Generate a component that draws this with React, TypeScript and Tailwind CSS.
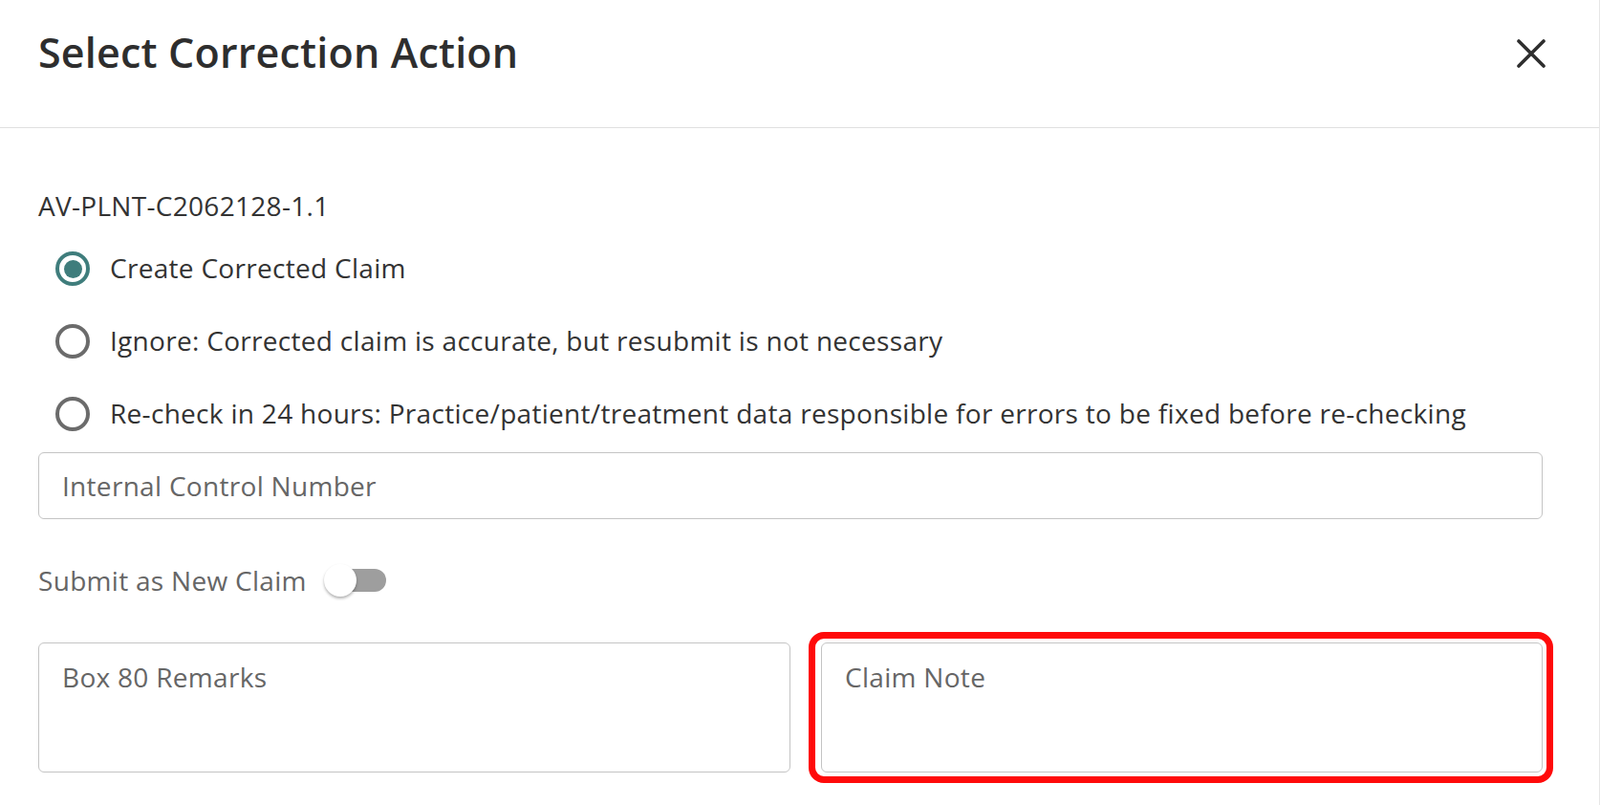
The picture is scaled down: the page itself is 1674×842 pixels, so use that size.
import { useState } from 'react';

const options = [
  'Create Corrected Claim',
  'Ignore: Corrected claim is accurate, but resubmit is not necessary',
  'Re-check in 24 hours: Practice/patient/treatment data responsible for errors to be fixed before re-checking',
];

function Radio({ checked }: { checked: boolean }) {
  return (
    <span
      className={
        checked
          ? 'flex h-[36px] w-[36px] shrink-0 items-center justify-center rounded-full border-[4px] border-[#3f7d7c]'
          : 'flex h-[36px] w-[36px] shrink-0 items-center justify-center rounded-full border-[4px] border-[#6b6b6b]'
      }
    >
      {checked && <span className="h-[19px] w-[19px] rounded-full bg-[#3f7d7c]" />}
    </span>
  );
}

export default function App() {
  const [selected, setSelected] = useState(0);

  return (
    <div className="min-h-screen w-full border-r border-[#e6e6e6] bg-white font-['Open_Sans',sans-serif] tracking-[0.3px] text-[#333]">
      {/* Header */}
      <div className="flex h-[134px] items-center justify-between border-b border-[#e0e0e0] pb-[22px] pl-[40px] pr-[56px]">
        <h1 className="text-[43px] font-semibold tracking-[0.2px] text-[#2e2e2e]">Select Correction Action</h1>
        <button className="flex h-[30px] w-[30px] items-center justify-center">
          <svg width="30" height="30" viewBox="0 0 30 30">
            <path d="M2 2 L28 28 M28 2 L2 28" stroke="#2e2e2e" strokeWidth="3.6" strokeLinecap="round" />
          </svg>
        </button>
      </div>

      {/* Body */}
      <div className="pl-[40px] pr-[59px] pt-[61px]">
        <div className="h-[40px] text-[28px] leading-[40px] text-[#333]">AV-PLNT-C2062128-1.1</div>

        <div className="mt-[8px] flex flex-col">
          {options.map((label, i) => (
            <label
              key={i}
              onClick={() => setSelected(i)}
              className="flex h-[76px] cursor-pointer items-center gap-[21px] pl-[18px]"
            >
              <Radio checked={selected === i} />
              <span className="-mt-[3px] text-[28px] text-[#333]">{label}</span>
            </label>
          ))}
        </div>

        <input
          placeholder="Internal Control Number"
          className="mt-[2px] h-[70px] w-full rounded-[6px] border border-[#c4c4c4] px-[24px] text-[28px] text-[#333] outline-none placeholder:text-[#666]"
        />

        <div className="mt-[44px] flex h-[40px] items-center">
          <span className="text-[28px] text-[#666]">Submit as New Claim</span>
          <div className="relative ml-[25px] h-[24px] w-[58px] rounded-full bg-[#9e9e9e]">
            <span className="absolute left-[-7px] top-[-5px] h-[34px] w-[34px] rounded-full bg-white shadow-[0_2px_3px_rgba(0,0,0,0.3)]" />
          </div>
        </div>

        <div className="mt-[45px] grid grid-cols-2">
          <textarea
            placeholder="Box 80 Remarks"
            className="h-[136px] w-full resize-none rounded-[6px] border border-[#c4c4c4] px-[24px] py-[16px] text-[28px] leading-[38px] text-[#333] outline-none placeholder:text-[#666]"
          />
          <div className="pl-[32px]">
            <div className="relative">
              <textarea
                placeholder="Claim Note"
                className="block h-[136px] w-full resize-none rounded-[6px] border border-[#c4c4c4] px-[24px] py-[16px] text-[28px] leading-[38px] text-[#333] outline-none placeholder:text-[#666]"
              />
              {/* highlight */}
              <div className="pointer-events-none absolute -bottom-[11px] -left-[13px] -right-[11px] -top-[11px] rounded-[16px] border-[7px] border-[#ff0a0a]" />
            </div>
          </div>
        </div>
      </div>
    </div>
  );
}
